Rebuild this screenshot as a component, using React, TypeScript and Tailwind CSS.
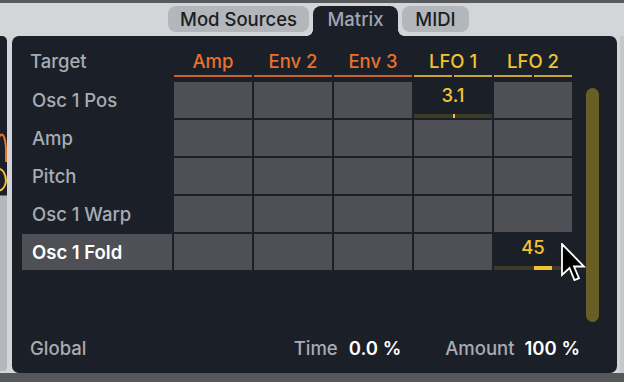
import React from "react";

const ORANGE = "text-[#e8712c]";
const YELLOW = "text-[#f1c232]";

function HeaderCell({ label, lfo }: { label: string; lfo?: boolean }) {
  return (
    <div className="flex flex-col items-stretch h-[34px]">
      <div className={`h-[22px] mt-[4px] leading-[22px] text-center ${lfo ? YELLOW : ORANGE}`}>{label}</div>
      <div className="flex-1" />
      {lfo ? (
        <div className="flex gap-[2px] h-[2px] mb-[3px]">
          <div className="flex-1 bg-[#c9a43a]" />
          <div className="flex-1 bg-[#c9a43a]" />
        </div>
      ) : (
        <div className="h-[2px] mb-[3px] bg-[#c6622c]" />
      )}
    </div>
  );
}

function Cell() {
  return <div className="bg-[#4e5056]" />;
}

function ValueCell({ value, from, to }: { value: string; from: number; to: number }) {
  return (
    <div className="flex flex-col">
      <div className={`flex-1 flex items-start justify-center ${YELLOW} leading-[22px] pt-[2px]`}>{value}</div>
      <div className="relative h-[4px] bg-[#3d3a27]">
        <div className="absolute top-0 bottom-0 bg-[#f1c232]" style={{ left: from, width: to - from }} />
      </div>
    </div>
  );
}

const rows = ["Osc 1 Pos", "Amp", "Pitch", "Osc 1 Warp", "Osc 1 Fold"];

export default function App() {
  return (
    <div
      className="w-[624px] h-[382px] bg-[#d4d5d8] flex flex-col overflow-hidden relative"
      style={{ fontFamily: "Inter, 'Noto Sans', sans-serif" }}
    >
      <div className="h-[3px] bg-[#58595d]" />
      {/* tabs */}
      <div className="h-[33px] flex items-start pt-[3px] pl-[168px] gap-[4px] text-[18.5px] font-medium">
        <div className="h-[26px] w-[141px] rounded-[8px] bg-[#b3b6bb] text-[#1c1e22] flex items-center justify-center leading-[22px]">
          Mod Sources
        </div>
        <div className="relative h-[30px] w-[85px] rounded-t-[8px] bg-[#1b2028] text-[#a1a6ae] flex items-start justify-center pt-[2px]">
          <span className="leading-[22px]">Matrix</span>
          <div className="absolute bottom-0 left-[-6px] w-[6px] h-[6px] bg-[radial-gradient(circle_at_0_0,transparent_5.5px,#1b2028_6px)]" />
          <div className="absolute bottom-0 right-[-6px] w-[6px] h-[6px] bg-[radial-gradient(circle_at_100%_0,transparent_5.5px,#1b2028_6px)]" />
        </div>
        <div className="h-[26px] w-[67px] rounded-[8px] bg-[#b3b6bb] text-[#1c1e22] flex items-center justify-center leading-[22px]">
          MIDI
        </div>
      </div>
      {/* body */}
      <div className="flex h-[337px]">
        {/* left sliver */}
        <div className="w-[7px] h-[335px] flex flex-col">
          <div className="h-[159px] bg-[#1b2028] rounded-tr-[5px] relative overflow-hidden">
            <svg width="7" height="159" viewBox="0 0 7 159" className="absolute left-0 top-0">
              <path d="M-6 126 C -2 90, 5 94, 6 112 L 6 126" stroke="#e8712c" strokeWidth="2" fill="none" />
              <path d="M-4 133 C 3 131, 6 139, 6 145 C 5 153, 0 156, -4 154" stroke="#f1c232" strokeWidth="2" fill="none" />
            </svg>
          </div>
          <div className="h-[1px] bg-[#6b6f76]" />
          <div className="flex-1 bg-[#b4b8be] rounded-br-[4px]" />
        </div>
        <div className="w-[5px]" />
        {/* main panel */}
        <div className="w-[605px] h-[337px] bg-[#1b2028] rounded-[7px] flex flex-col pl-[10px] pt-[10px] text-[18.5px] font-medium text-[#a7acb4] relative">
          <div className="flex">
            <div className="grid grid-cols-[150px_repeat(5,78px)] grid-rows-[34px_repeat(5,36px)] gap-x-[2px] gap-y-[2px]">
              <div className="pl-[8px] mt-[4px] leading-[22px]">Target</div>
              <HeaderCell label="Amp" />
              <HeaderCell label="Env 2" />
              <HeaderCell label="Env 3" />
              <HeaderCell label="LFO 1" lfo />
              <HeaderCell label="LFO 2" lfo />
              {rows.map((r, i) => (
                <React.Fragment key={r}>
                  <div
                    className={`pl-[10px] flex items-center leading-[22px] ${
                      i === 4 ? "bg-[#4e5056] text-white font-semibold" : ""
                    }`}
                  >
                    {r}
                  </div>
                  {i === 0 ? (
                    <>
                      <Cell />
                      <Cell />
                      <Cell />
                      <ValueCell value="3.1" from={39} to={41} />
                      <Cell />
                    </>
                  ) : i === 4 ? (
                    <>
                      <Cell />
                      <Cell />
                      <Cell />
                      <Cell />
                      <ValueCell value="45" from={40} to={58} />
                    </>
                  ) : (
                    <>
                      <Cell />
                      <Cell />
                      <Cell />
                      <Cell />
                      <Cell />
                    </>
                  )}
                </React.Fragment>
              ))}
            </div>
            <div className="ml-[14px] mt-[42px] w-[13px] h-[234px] rounded-full bg-[#6a5e27]" />
          </div>
          <div className="flex-1" />
          <div className="flex items-center h-[22px] mb-[13px] pl-[8px] pr-[37px]">
            <span>Global</span>
            <div className="flex-1" />
            <span>Time</span>
            <span className="ml-[11px] text-white font-semibold">0.0 %</span>
            <span className="ml-[44px]">Amount</span>
            <span className="ml-[10px] text-white font-semibold">100 %</span>
          </div>
          {/* cursor */}
          <svg
            className="absolute left-[549px] top-[207px]"
            width="28"
            height="44"
            viewBox="0 0 28 44"
          >
            <path
              d="M1 1 L1 32 L8.5 25 L13.5 37 L18 35.2 L13 23.5 L23 23.5 Z"
              fill="#000"
              stroke="#fff"
              strokeWidth="1.8"
              strokeLinejoin="miter"
            />
          </svg>
        </div>
        <div className="w-[3px]" />
        <div className="w-[4px] bg-[#c5c7cb]" />
      </div>
      <div className="flex-1 bg-[#56575b]" />
    </div>
  );
}
